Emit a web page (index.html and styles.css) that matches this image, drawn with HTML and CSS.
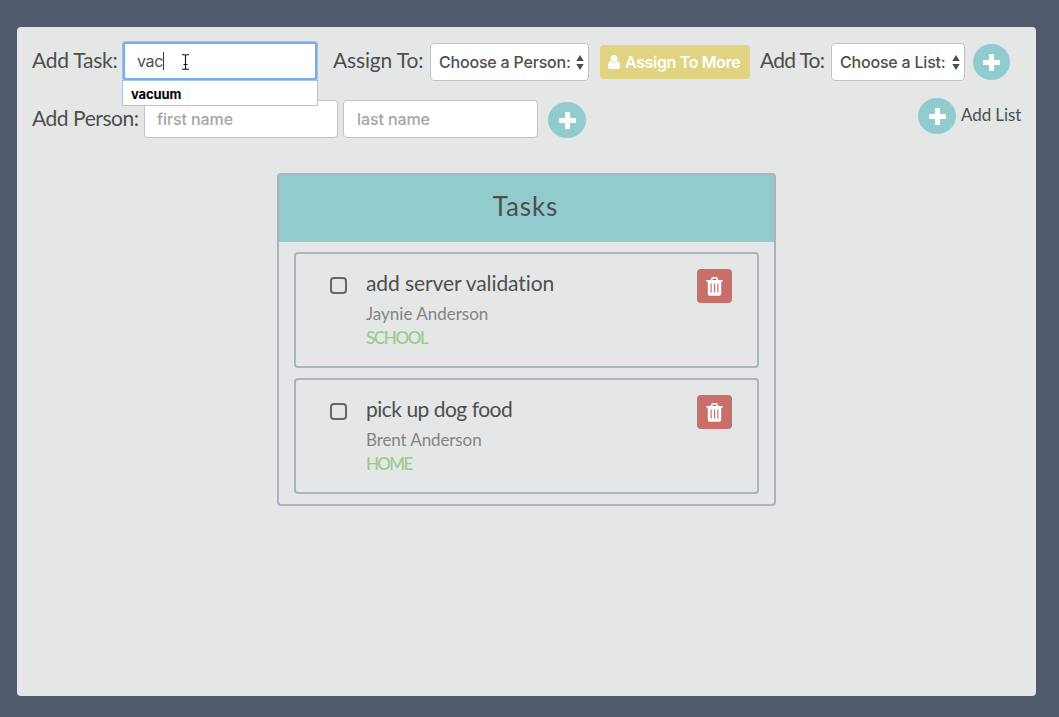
FILE: index.html
```html
<!DOCTYPE html>
<html lang="en">
<head>
<meta charset="utf-8">
<title>Tasks</title>
<link rel="stylesheet" href="styles.css">
</head>
<body>
<svg class="defs" width="0" height="0">
  <symbol id="plus" viewBox="0 0 18 18"><path d="M7.3 0h3.4q1 0 1 1v5.3H17q1 0 1 1v3.4q0 1-1 1h-5.3V17q0 1-1 1H7.3q-1 0-1-1v-5.3H1q-1 0-1-1V7.3q0-1 1-1h5.3V1q0-1 1-1z"/></symbol>
  <symbol id="arrows" viewBox="0 0 8 15"><path d="M4 0l3.7 6H.3zM4 15L.3 9h7.4z"/></symbol>
  <symbol id="trash" viewBox="0 0 17 19"><path fill-rule="evenodd" d="M4.6 3l.8-2Q5.8 0 6.8 0h3.4q1 0 1.4 1l.8 2H16q1 0 1 .8t-1 .8h-.8v11.8q0 2.3-2.2 2.3H4q-2.200 0-2.200-2.300V4.600H1q-1 0-1-.8T1 3zm1.700 0h4.400L10.100 1.500H6.900zM4.500 6.500v9h1.200v-9zm3.400 0v9h1.200v-9zm3.400 0v9h1.200v-9z"/></symbol>
</svg>
<main class="panel">
  <div class="row row-task">
    <label class="label label-task">Add Task:</label>
    <div class="autocomplete">
      <div class="field field-focus"><span class="typed">vac</span></div>
      <div class="suggestions">vacuum</div>
      <svg class="ibeam" width="9" height="16" viewBox="0 0 9 16"><path d="M1 .8h2.300q1.200 0 1.200 1.200 0-1.200 1.200-1.200H8M4.500 2v12M2.500 10.500h4M1 15.200h2.300q1.200 0 1.200-1.200 0 1.200 1.200 1.200H8"/></svg>
    </div>
    <label class="label label-assign">Assign To:</label>
    <div class="field select select-person"><span>Choose a Person:</span><svg class="arrows"><use href="#arrows"/></svg></div>
    <button class="more"><svg class="person" viewBox="0 0 12 14"><circle cx="6" cy="3.500" r="3.400"/><path d="M2.600 6Q0 6.500 0 11.500 0 14 2.200 14h7.600Q12 14 12 11.500 12 6.500 9.400 6 8 7.800 6 7.800T2.600 6z"/></svg><span>Assign To More</span></button>
    <label class="label label-to">Add To:</label>
    <div class="field select select-list"><span>Choose a List:</span><svg class="arrows"><use href="#arrows"/></svg></div>
    <button class="round"><svg><use href="#plus"/></svg></button>
  </div>
  <div class="row row-person">
    <label class="label label-person">Add Person:</label>
    <div class="field name">first name</div>
    <div class="field name">last name</div>
    <button class="round round-person"><svg><use href="#plus"/></svg></button>
    <div class="add-list">
      <button class="round"><svg><use href="#plus"/></svg></button>
      <span class="add-list-text">Add List</span>
    </div>
  </div>
  <section class="card">
    <h1 class="card-title"><span>Tasks</span></h1>
    <div class="tasks">
      <article class="task">
        <span class="check"></span>
        <div class="info">
          <div class="task-name name-server">add server validation</div>
          <div class="who who-jaynie">Jaynie Anderson</div>
          <div class="list list-school">SCHOOL</div>
        </div>
        <button class="delete"><svg><use href="#trash"/></svg></button>
      </article>
      <article class="task">
        <span class="check"></span>
        <div class="info">
          <div class="task-name name-dog">pick up dog food</div>
          <div class="who who-brent">Brent Anderson</div>
          <div class="list list-home">HOME</div>
        </div>
        <button class="delete"><svg><use href="#trash"/></svg></button>
      </article>
    </div>
  </section>
</main>
</body>
</html>
```
FILE: styles.css
```css
* { box-sizing: border-box; }
body { margin: 0; height: 717px; overflow: hidden; padding: 27px 23px 21px 17px; background: #51596d; color: #4d4f4f; font: 16px Inter, sans-serif; }
.defs { position: absolute; }
button { border: 0; padding: 0; flex: none; font: inherit; }
svg { fill: #fff; flex: none; }
.panel { width: 1019px; height: 669px; padding: 15px 15px 0; border-radius: 4px; background: #e4e7e6; }
.row { display: flex; align-items: flex-start; }
.label, .add-list-text, .card-title, .info { font-family: Lato, sans-serif; white-space: nowrap; }
.label { flex: none; font-size: 21px; line-height: 35px; }
.label-task { width: 91px; letter-spacing: -.25px; }
.label-assign { width: 97px; margin-left: 16px; letter-spacing: -.15px; }
.label-to { width: 71px; margin-left: 10px; letter-spacing: -.7px; }
.label-person { width: 112px; letter-spacing: -.45px; }
.row-task { height: 58px; }
.row-person { height: 73px; }
.field { flex: none; height: 38px; border: 1px solid #c1c4c4; border-radius: 4px; background: #fff; line-height: 36px; white-space: nowrap; }
.autocomplete { position: relative; width: 194px; flex: none; }
.field-focus { border: 2px solid #78ade8; border-radius: 3px; box-shadow: 0 0 0 1px #9cc3ee; padding-left: 12px; line-height: 35px; }
.typed { display: inline-block; height: 18px; line-height: 18px; border-right: 1px solid #333; letter-spacing: -.3px; }
.suggestions { position: absolute; z-index: 1; top: 38px; left: -1px; width: 196px; height: 26px; border: 1px solid #a4c5e8; background: #fff; color: #000; padding-left: 8px; font-size: 13px; font-weight: 700; line-height: 27px; letter-spacing: -.1px; }
.ibeam { position: absolute; left: 58px; top: 12px; fill: none; stroke: #111; stroke-width: 1.1; }
.select { display: flex; align-items: center; justify-content: space-between; margin-top: 1px; padding: 0 4px 0 8px; font-weight: 500; letter-spacing: -.2px; }
.select-person { width: 159px; }
.select-list { width: 134px; }
.arrows { width: 8px; height: 15px; fill: #4d4f4f; }
.more { display: flex; align-items: center; width: 150px; height: 34px; margin: 3px 0 0 11px; padding-left: 8px; gap: 5px; border-radius: 4px; background: #e0d381; color: #fff; font-weight: 600; white-space: nowrap; letter-spacing: -.35px; }
.person { width: 12px; height: 14px; }
.round { display: flex; align-items: center; justify-content: center; width: 38px; height: 36px; border-radius: 50%; background: #92cbcd; }
.round svg { width: 17px; height: 17px; }
.row-task > .round { width: 37px; margin: 2px 0 0 8px; }
.name { width: 194px; padding-left: 12px; color: #a5a5a5; font-weight: 500; letter-spacing: -.1px; }
.name + .name { width: 195px; margin-left: 5px; padding-left: 13px; }
.round-person { margin: 2px 0 0 10px; }
.add-list { display: flex; align-items: center; margin: -2px 0 0 auto; }
.add-list-text { width: 60px; margin-left: 5px; font-size: 17px; line-height: 20px; padding-bottom: 2px; letter-spacing: -.1px; }
.card { width: 499px; height: 333px; margin-left: 245px; border: 2px solid #a9b4c3; border-radius: 4px; }
.card-title { margin: 0; height: 67px; background: #92cbcd; text-align: center; font-size: 26px; font-weight: 400; line-height: 63px; letter-spacing: .9px; }
.card-title span { position: relative; left: -1px; }
.tasks { display: grid; gap: 10px; padding: 10px 15px; }
.task { display: flex; align-items: flex-start; height: 116px; border: 2px solid #a9b4c3; border-radius: 4px; padding: 15px 25px 0 34px; }
.check { width: 17px; height: 17px; margin-top: 8px; border: 2px solid #656767; border-radius: 4px; flex: none; }
.info { flex: 1; padding-left: 19px; }
.task-name { height: 33px; font-size: 21px; line-height: 27px; letter-spacing: -.1px; }
.name-dog { letter-spacing: -.5px; }
.who { height: 24px; color: #838585; font-size: 17px; line-height: 24px; }
.who-brent { letter-spacing: -.1px; }
.list { height: 24px; color: #98cc8a; font-size: 17px; font-weight: 500; line-height: 24px; letter-spacing: -1.4px; }
.list-home { letter-spacing: -1.7px; }
.delete { display: grid; place-items: center; width: 35px; height: 34px; border-radius: 4px; background: #ca6e6c; }
.delete svg { width: 17px; height: 19px; }
```
